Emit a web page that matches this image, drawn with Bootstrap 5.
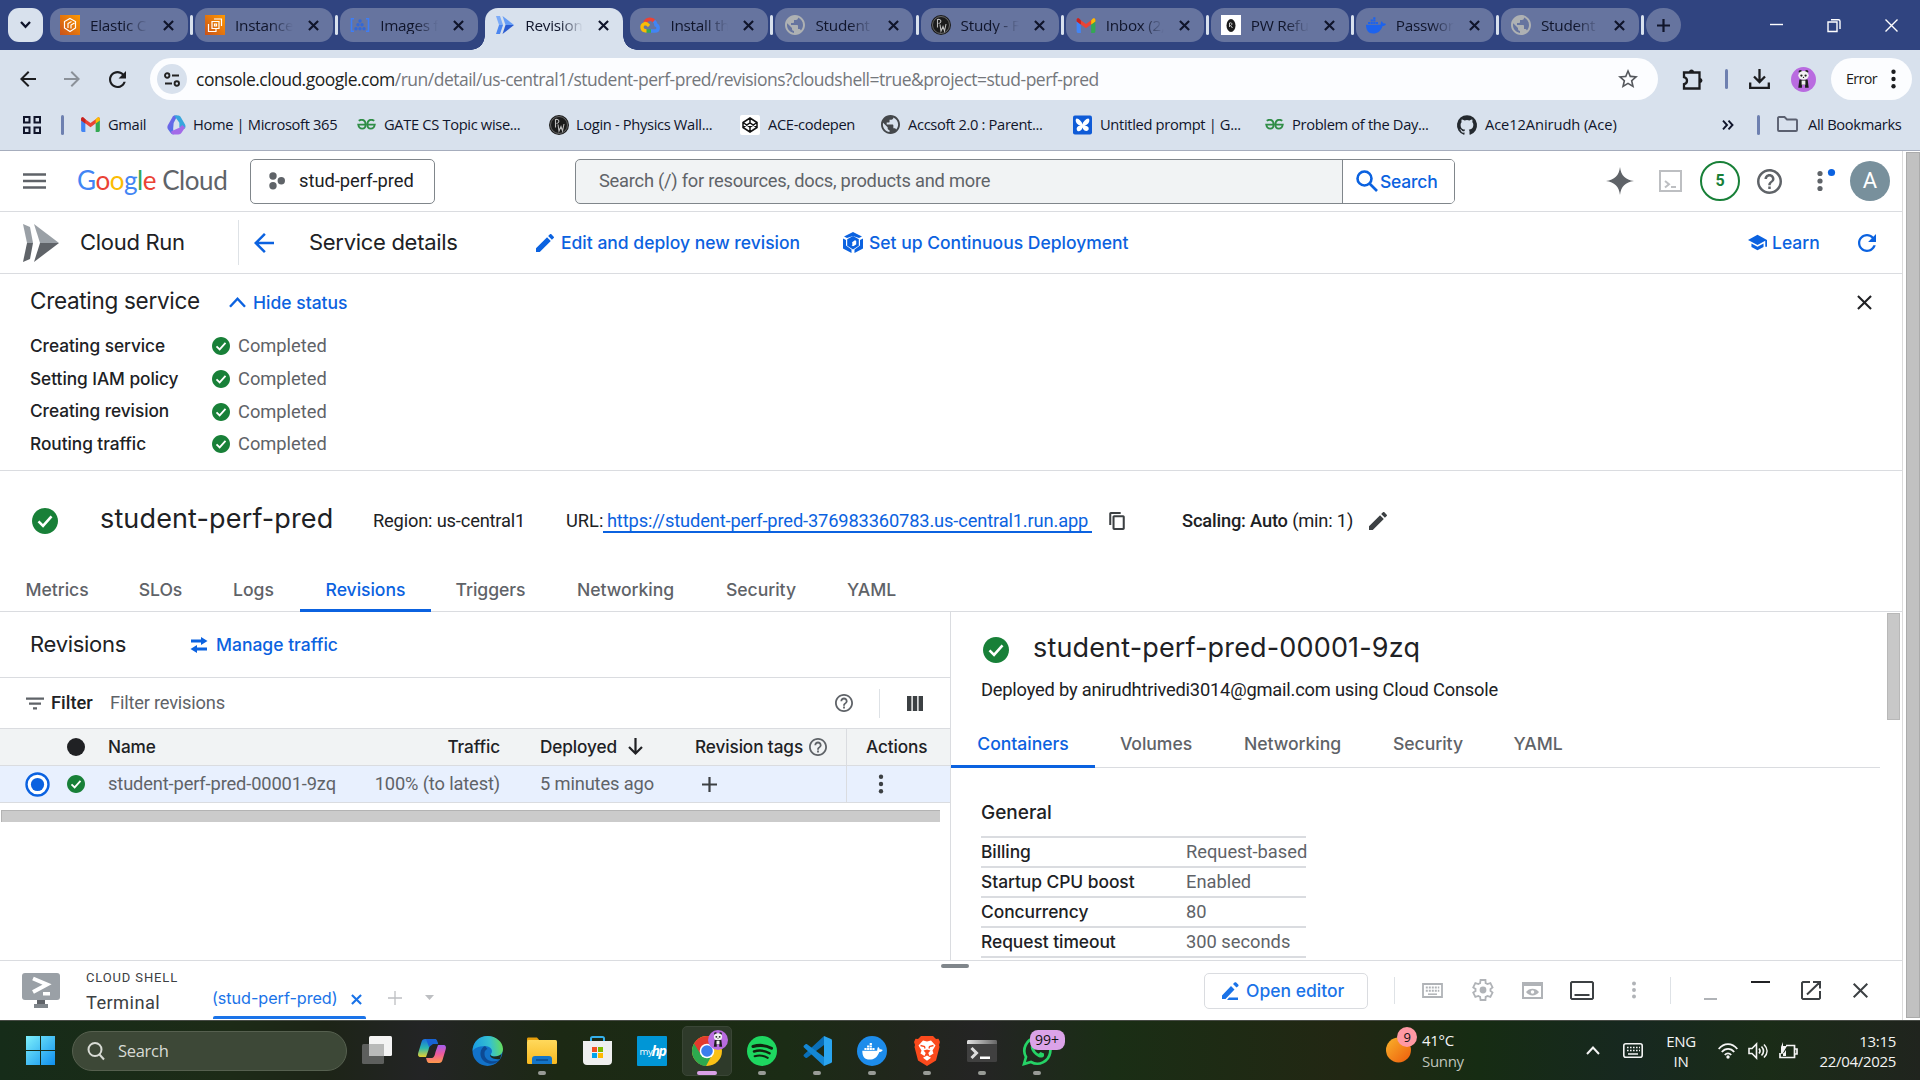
<!DOCTYPE html>
<html lang="en">
<head>
<meta charset="utf-8">
<title>Revisions – Cloud Run</title>
<link href="https://cdn.jsdelivr.net/npm/bootstrap@5.3.0/dist/css/bootstrap.min.css" rel="stylesheet">
<style>
:root{--blue:#0b62e0;--ink:#202124;--dim:#5f6368;--rule:#dadce0;--ok:#188038}
body{width:1920px;height:1080px;overflow:hidden;background:#fff;color:var(--ink);font-family:Roboto,sans-serif;font-size:18.3px;line-height:1.2}
svg{display:block;flex:none;overflow:visible}
.gs{font-family:Inter,sans-serif}
.rowgrid{display:grid;align-items:center;white-space:nowrap}
.fillc{fill:currentColor}
.linec{fill:none;stroke:currentColor}
.blue{color:var(--blue)}.dim{color:var(--dim)}.okc{color:var(--ok)}
.fw5{font-weight:500}
.act{font-family:Inter,sans-serif;font-weight:500;font-size:17.5px;letter-spacing:0;color:var(--blue)}

/* browser tabs */
.tabstrip{height:50px;background:#304480;padding:8px 0 0 8px;font-family:"Open Sans",sans-serif;font-size:15.3px;letter-spacing:-.25px;color:#10152b}
.tabsearch{width:35px;height:34px;border-radius:11px;background:#d8e1ed;margin-right:7px}
.btab{width:138px;height:34px;border-radius:13px;background:#66749f;padding:0 10px;position:relative;flex:none}
.btab .lbl{width:58px;margin-left:10px;overflow:hidden;white-space:nowrap;-webkit-mask-image:linear-gradient(90deg,#000 60%,transparent);mask-image:linear-gradient(90deg,#000 60%,transparent)}
.btab .cls{margin-left:15px}
.tsep{width:7.1px;height:34px;flex:none}
.tsep i{width:3px;height:20px;border-radius:2px;background:#d8e1ed}
.btab.on{height:42px;background:#d8e1ed;border-radius:13px 13px 0 0;padding-bottom:8px}
.btab.on::before,.btab.on::after{content:"";position:absolute;bottom:0;width:14px;height:14px}
.btab.on::before{left:-14px;background:radial-gradient(circle at 0 0,transparent 13.5px,#d8e1ed 14px)}
.btab.on::after{right:-14px;background:radial-gradient(circle at 100% 0,transparent 13.5px,#d8e1ed 14px)}
.newtab{width:35px;height:34px;border-radius:17px;background:#66749f}
.winctl{margin-left:auto;padding-right:22px;gap:44px;height:34px;color:#fff}

/* toolbar and bookmarks */
.toolrow{height:58px;background:#d8e1ed;padding-left:20px;grid-template-columns:44px 45px 41px 1532px 43px 24px 42px 40px 81px;color:#1c1d20}
.omni{width:1508px;height:42px;border-radius:21px;background:#fcfdff;padding:0 20px 0 7px;font-family:"Open Sans",sans-serif;font-size:17.5px;letter-spacing:-.5px;color:#74777c}
.siteinfo{width:30px;height:30px;border-radius:50%;background:#d8e1ed;margin-right:9px}
.vbar{width:3px;height:20px;border-radius:2px;background:#6e80b0}
.errpill{height:42px;border-radius:21px;background:#fcfdff;padding:0 15px;font-family:"Open Sans",sans-serif;font-size:14.3px;letter-spacing:-.6px}
.markrow{height:43px;padding:0 0 9px 23px;background:#d8e1ed;border-bottom:1px solid #a6adbd;grid-template-columns:38px 20px 86px 190px 192px 191px 141px 192px 192px 192px 265px 35px 20px 150px;font-family:"Open Sans",sans-serif;font-size:14.7px;letter-spacing:-.34px;color:#10152b}
.bm{display:flex;align-items:center;gap:8px}

/* page */
.page{height:869px}
.view{width:1902px}
.pagebar{width:18px;border-left:1px solid #dcdcdc;background:#fff;padding:1px 0 2px 3px}
.pagebar div{height:100%;background:#c1c1c1;border:1px solid #ababab}
.headrow{height:61px;border-bottom:1px solid var(--rule);padding-left:23px;grid-template-columns:54px 173px 325px 1031px 53px 41px 57px 59px 34px 50px}
.glogo{font-family:Lato,sans-serif;font-size:26px;letter-spacing:-.45px}
.projbtn{width:185px;height:45px;border:1px solid #80868b;border-radius:5px;padding-left:18px;gap:14px}
.searchbox{width:880px;height:45px;border:1px solid #80868b;border-radius:5px;background:#f1f3f4;overflow:hidden}
.searchbox .ph{width:766px;padding-left:23px;letter-spacing:-.24px}
.searchbtn{flex:1;background:#fff;border-left:1px solid #80868b;padding-left:13px;gap:2px}
.quota{width:40px;height:40px;border-radius:50%;border:2.5px solid var(--ok);font-size:16px;font-weight:700}
.avatar{width:40px;height:40px;border-radius:50%;background:#78909c;color:#fff;font-size:22px}
.titlerow{height:62px;border-bottom:1px solid var(--rule);padding-left:23px;grid-template-columns:57px 158px 16px 55px 227px 307px 905px 110px 30px}
.title{font-family:Inter,sans-serif;font-size:22px;letter-spacing:-.3px}
.statusbox{height:197px;border-bottom:1px solid var(--rule);padding:11px 28px 0 30px}
.stathead{height:31px;grid-template-columns:199px 1626px 20px}
.stathead .h{font-family:Inter,sans-serif;font-size:22.5px;letter-spacing:-.3px}
.statrows{padding-top:14px}
.statline{height:32.7px;grid-template-columns:182px 26px 200px}
.statline b{font-family:Inter,sans-serif;font-weight:500;font-size:17.3px;letter-spacing:-.05px}
.svcrow{height:100px;padding-left:32px;grid-template-columns:68px 273px 193px 543px 73px 187px 30px}
.svcrow .h{font-family:Inter,sans-serif;font-size:27px;letter-spacing:.14px;padding-bottom:4px}
.svcrow .r{letter-spacing:-.18px}
.svcrow .url{color:var(--blue);border-bottom:2px solid var(--blue);padding:0 4px;margin-left:-5px;letter-spacing:-.15px}
.mtabs{display:flex;border-bottom:1px solid var(--rule);font-family:Inter,sans-serif;font-weight:500;font-size:17.6px;letter-spacing:-.05px;color:var(--dim);white-space:nowrap}
.mtabs span{display:flex;align-items:center;justify-content:center;flex:none;margin-bottom:-1px;border-bottom:3px solid transparent}
.mtabs .on{color:var(--blue);border-color:var(--blue)}
.mtabs.main{height:41px}
.mtabs.sub{height:31px;width:929px}
.mtabs.sub span{height:31px;padding-bottom:14px}
.leftpane{width:951px;border-right:1px solid var(--rule)}
.revhead{height:66px;border-bottom:1px solid var(--rule);padding-left:30px;grid-template-columns:160px 26px 200px}
.filterrow{height:51px;border-bottom:1px solid var(--rule);padding-left:26px;grid-template-columns:25px 59px 725px 44px 28px 30px}
.revcols{padding-left:25px;grid-template-columns:42px 41px 392px 40px 155px 151px 35px 104px}
.revcols.hd{height:37px;background:#f1f3f4;border-bottom:1px solid var(--rule);font-family:Inter,sans-serif;font-weight:500;font-size:17.2px;letter-spacing:-.1px}
.revcols.bd{height:37px;padding-bottom:1px;background:#e8f0fe;border-bottom:1px solid var(--rule);color:var(--dim);letter-spacing:-.14px}
.revcols .acts{border-left:1px solid var(--rule);height:36px;display:flex;align-items:center;padding-left:19px;grid-column:7/9}
.revcols.bd .acts{padding-left:31px;color:#3c4043}
.hbar{width:939px;height:12px;margin:7px 0 0 1px;background:#cbcbcb;border-top:1px solid #b3b3b3;border-left:1px solid #b3b3b3}
.rightpane{width:951px}
.rvtitle{height:57px;padding:19px 0 0 32px;gap:24px}
.rvtitle .h{font-family:Inter,sans-serif;font-size:27px;letter-spacing:.16px;padding-bottom:3px}
.rvby{padding:10px 0 0 30px;height:68px;letter-spacing:-.2px}
.vthumb{width:13px;height:107px;margin-top:1px;background:#c8c8c8;border:1px solid #b8b8b8}
.gentitle{padding:34px 0 0 30px;height:68px;font-size:19px}
.facts{width:325px;margin-left:30px;border-top:2px solid var(--rule)}
.facts div{height:30px;border-bottom:2px solid var(--rule);grid-template-columns:205px 120px}
.facts b{font-family:Inter,sans-serif;font-weight:500;font-size:17.4px;letter-spacing:-.05px}
.shell{height:59px;border-top:1px solid var(--rule);background:#fff;padding-left:22px;grid-template-columns:64px 126px 139px 37px 37px 779px 190px 28px 50px 50px 48px 59px 43px 32px 47px 50px 52px 30px;position:relative}
.grip{position:absolute;left:941px;top:3px;width:28px;height:4px;border-radius:2px;background:#80868b}
.shtab{color:#1a73e8;font-family:Inter,sans-serif;font-size:16.2px;letter-spacing:-.05px;padding-top:18px}
.shtab::after{content:"";position:absolute;left:213px;bottom:0;width:153px;height:3px;border-radius:2px 2px 0 0;background:#1a73e8}
.edbtn{width:164px;height:36px;margin-top:1px;border:1px solid var(--rule);border-radius:5px;padding-left:17px;gap:6px;color:#1a73e8}

/* taskbar */
.taskbar{height:60px;border-top:1px solid #474b45;padding-left:26px;grid-template-columns:46px 277.5px repeat(13,55px) 319.5px 202px 37px 37px 58px 30px 30px 24px 94px;color:#f4f4f4;font-family:"Open Sans",sans-serif;font-size:15px;letter-spacing:-.3px;
background:linear-gradient(90deg,#162c19 0,#1d2b17 12%,#1d2417 17%,#232425 22%,#1c2914 29%,#1b2c15 41%,#21261c 47%,#242424 51%,#1a2e15 58%,#222713 70%,#162c13 77%,#172820 85%,#1a2c17 92%,#20241e 100%)}
.tsearch{width:275px;height:40px;border-radius:20px;background:#3d4837;border:1px solid #56604f;padding-left:14px;gap:13px;font-size:16.5px;color:#d8dbd5}
.tapp{height:50px;display:flex;flex-direction:column;align-items:center;justify-content:center;position:relative}
.tapp.run::after{content:"";position:absolute;bottom:1px;width:8px;height:4px;border-radius:2px;background:#989b96}
.tapp.cur{width:50px;margin-left:2.5px;background:#2e3a2a;border:1px solid #3a4636;border-radius:5px}
.tapp.cur::after{width:20px;background:#d9a0e6;bottom:0}
.cnt{position:absolute;left:20px;top:4px;width:35px;height:20px;border-radius:8px;background:#dba3e8;color:#111;text-align:center;font-size:14px;line-height:20px;letter-spacing:0}
.wx{position:relative;padding-left:38px;line-height:21px}
.wxn{position:absolute;left:13px;top:-3px;width:20px;height:20px;border-radius:50%;background:#ff99a4;color:#111;text-align:center;font-size:13px;line-height:20px}
</style>
<script src="https://cdn.jsdelivr.net/npm/bootstrap@5.3.0/dist/js/bootstrap.bundle.min.js"></script>
</head>
<body class="d-flex flex-column">
<svg width="0" height="0" class="position-absolute">
<defs>
<linearGradient id="gor" x1="0" y1="1" x2="1" y2="0"><stop offset="0" stop-color="#c8511b"/><stop offset="1" stop-color="#f90"/></linearGradient>
<linearGradient id="gwin" x1="0" y1="0" x2="1" y2="1"><stop offset="0" stop-color="#7df0fb"/><stop offset="1" stop-color="#0f8fee"/></linearGradient>
<linearGradient id="gedge" x1="0" y1="0.2" x2="1" y2="0.1"><stop offset="0" stop-color="#1b9de2"/><stop offset=".55" stop-color="#35c1d0"/><stop offset="1" stop-color="#6be04f"/></linearGradient>
<linearGradient id="gsun" x1="0" y1="0" x2="1" y2="1"><stop offset="0" stop-color="#f9b32b"/><stop offset="1" stop-color="#ee5b0c"/></linearGradient>
<linearGradient id="gcp1" x1="0" y1="0" x2="0" y2="1"><stop offset="0" stop-color="#1a6fe0"/><stop offset=".5" stop-color="#29b7b0"/><stop offset="1" stop-color="#e8d030"/></linearGradient>
<linearGradient id="gcp2" x1="0" y1="0" x2="0" y2="1"><stop offset="0" stop-color="#a35df0"/><stop offset=".5" stop-color="#ee5a9c"/><stop offset="1" stop-color="#ff9a4a"/></linearGradient>
<linearGradient id="gm1" x1="0" y1="0" x2="1" y2="1"><stop offset="0" stop-color="#8a5be8"/><stop offset="1" stop-color="#2f7de8"/></linearGradient>
<linearGradient id="gfold" x1="0" y1="0" x2="0" y2="1"><stop offset="0" stop-color="#ffd95c"/><stop offset="1" stop-color="#f8b91f"/></linearGradient>
<linearGradient id="gterm" x1="0" y1="0" x2="1" y2="0"><stop offset="0" stop-color="#e0e0e0"/><stop offset="1" stop-color="#666"/></linearGradient>
<symbol id="x" viewBox="0 0 24 24"><path class="fillc" d="M19 6.410L17.590 5 12 10.590 6.410 5 5 6.410 10.590 12 5 17.590 6.410 19 12 13.410 17.590 19 19 17.590 13.410 12z"/></symbol>
<symbol id="xs" viewBox="0 0 12 12"><path class="linec" stroke-width="2.300" d="M1 1l10 10M11 1L1 11"/></symbol>
<symbol id="ok" viewBox="2 2 20 20"><path class="fillc" d="M12 2C6.480 2 2 6.480 2 12s4.480 10 10 10 10-4.480 10-10S17.520 2 12 2z"/><path d="M7 12.300l3.500 3.500L17 8.500" fill="none" stroke="#fff" stroke-width="2"/></symbol>
<symbol id="pen" viewBox="3 3 18 18"><path class="fillc" d="M3 17.250V21h3.750L17.810 9.940l-3.750-3.750L3 17.250zM20.710 7.040c.390-.390.390-1.020 0-1.410l-2.340-2.340c-.390-.390-1.020-.390-1.410 0l-1.830 1.830 3.750 3.750 1.830-1.830z"/></symbol>
<symbol id="help" viewBox="2 2 20 20"><path class="fillc" d="M11 18h2v-2h-2v2zm1-16C6.480 2 2 6.480 2 12s4.480 10 10 10 10-4.480 10-10S17.520 2 12 2zm0 18c-4.410 0-8-3.590-8-8s3.590-8 8-8 8 3.590 8 8-3.590 8-8 8zm0-14c-2.210 0-4 1.790-4 4h2c0-1.100.900-2 2-2s2 .900 2 2c0 2-3 1.750-3 5h2c0-2.250 3-2.500 3-5 0-2.210-1.790-4-4-4z"/></symbol>
<symbol id="dots" viewBox="0 0 6 22"><g class="fillc"><circle cx="3" cy="3" r="2.400"/><circle cx="3" cy="11" r="2.400"/><circle cx="3" cy="19" r="2.400"/></g></symbol>
<symbol id="refresh" viewBox="4 4 16 16"><path class="fillc" d="M17.650 6.350C16.200 4.900 14.210 4 12 4c-4.420 0-7.990 3.580-7.990 8s3.570 8 7.990 8c3.730 0 6.840-2.550 7.730-6h-2.080c-.820 2.330-3.040 4-5.650 4-3.310 0-6-2.690-6-6s2.690-6 6-6c1.660 0 3.140.690 4.220 1.780L13 11h7V4l-2.350 2.350z"/></symbol>
<symbol id="back" viewBox="4 4 16 16"><path class="fillc" d="M20 11H7.830l5.590-5.590L12 4l-8 8 8 8 1.410-1.410L7.830 13H20v-2z"/></symbol>
<symbol id="globe" viewBox="2 2 20 20"><path class="fillc" d="M12 2C6.480 2 2 6.480 2 12s4.480 10 10 10 10-4.480 10-10S17.520 2 12 2zm-1 17.930c-3.950-.490-7-3.850-7-7.930 0-.620.080-1.210.210-1.790L9 15v1c0 1.100.900 2 2 2v1.930zm6.900-2.540c-.260-.810-1-1.390-1.900-1.390h-1v-3c0-.550-.450-1-1-1H8v-2h2c.550 0 1-.450 1-1V7h2c1.100 0 2-.900 2-2v-.410c2.930 1.190 5 4.060 5 7.410 0 2.080-.800 3.970-2.100 5.390z"/></symbol>
<symbol id="gmail" viewBox="0 0 20 16"><path fill="#4285f4" d="M0 2v12.500c0 .8.600 1.500 1.400 1.500H4.500V6z"/><path fill="#34a853" d="M20 2v12.500c0 .8-.6 1.500-1.400 1.500H15.500V6z"/><path fill="#ea4335" d="M1.500.3C.6.500 0 1.200 0 2v1.500L10 11l10-7.500V2c0-.8-.6-1.500-1.500-1.700L10 6.500z"/><path fill="#c5221f" d="M0 2v1.700L4.500 7V2.500L2.900.7C1.500-.3 0 .6 0 2z"/><path fill="#fbbc04" d="M20 2v1.700L15.500 7V2.500L17.100.7C18.500-.3 20 .6 20 2z"/></symbol>
<symbol id="pw" viewBox="0 0 20 20"><circle cx="10" cy="10" r="10" fill="#1b1b1b"/><circle cx="10" cy="10" r="8.500" fill="none" stroke="#999" stroke-width=".6"/><path d="M6.500 12.500V4.500c4-1 4.500 3.500 1 4M9 9.500l1 6.500 2-4.500 1.500 4.500L15 9" fill="none" stroke="#bbb" stroke-width="1.100"/></symbol>
<symbol id="gfg" viewBox="0 0 20 12"><g fill="none" stroke="#2f8d46" stroke-width="2"><path d="M1.500 2C5-.5 9 1 9 6c0 6-7 6-8 .2h8M18.500 2C15-.5 11 1 11 6c0 6 7 6 8 .2h-8"/></g></symbol>
<symbol id="whale" viewBox="0 0 24 20"><path class="fillc" d="M0 9h17.500c.4-1.500 0-3 1.200-4.200 1 .6 1.600 1.600 1.700 2.700 1.200-.2 2.500 0 3.600.6-.8 1.700-2.300 2.400-4 2.400C17.800 16.500 14 19.500 8.500 19.500 3 19.500 0 16 0 9zM2.500 5.800h2.600v2.500H2.500zM5.600 5.800h2.600v2.500H5.600zM8.700 5.800h2.600v2.500H8.700zM11.800 5.800h2.600v2.500h-2.600zM5.600 2.900h2.600v2.400H5.600zM8.700 2.900h2.600v2.400H8.700zM8.700 0h2.600v2.400H8.700z"/></symbol>
<symbol id="panda" viewBox="0 0 24 24"><circle cx="12" cy="12" r="12" fill="#b96be0"/><circle cx="9" cy="4.500" r="1.700" fill="#222"/><circle cx="15" cy="4.500" r="1.700" fill="#222"/><path d="M8 12h8l1 8h-3.500v-3h-3v3H7z" fill="#1d1d1d"/><rect x="10.200" y="13" width="3.600" height="4" fill="#eee"/><ellipse cx="12" cy="8" rx="5" ry="4.200" fill="#f2f2f2"/><circle cx="10" cy="8.200" r="1.100" fill="#222"/><circle cx="14" cy="8.200" r="1.100" fill="#222"/><circle cx="12" cy="10" r=".6" fill="#222"/></symbol>
</defs>
</svg>

<!-- browser tab strip -->
<div class="tabstrip d-flex align-items-start">
  <div class="tabsearch d-flex align-items-center justify-content-center"><svg width="11" height="8" viewBox="0 0 11 8"><path class="linec" stroke-width="2.300" d="M1 1l4.500 4.800L10 1"/></svg></div>
  <div class="btab d-flex align-items-center"><svg width="20" height="20" viewBox="0 0 20 20"><rect width="20" height="20" fill="url(#gor)"/><path d="M10 3.500l5.500 3v6.500L10 16.500 4.500 13V6.500zM8 13V8.500l3.500-2M11 13.500V10l3.500-2" fill="none" stroke="#fff" stroke-width="1.200"/></svg><span class="lbl">Elastic C</span><svg class="cls" width="11" height="11"><use href="#xs"/></svg></div>
  <div class="tsep d-flex align-items-center justify-content-center"><i></i></div>
  <div class="btab d-flex align-items-center"><svg width="20" height="20" viewBox="0 0 20 20"><rect width="20" height="20" fill="url(#gor)"/><path d="M7 6.500h7v7H7zM9 4h7.500v7M3.500 9v7.500H11V14M9.500 9h2v2h-2z" fill="none" stroke="#fff" stroke-width="1.200"/></svg><span class="lbl">Instance</span><svg class="cls" width="11" height="11"><use href="#xs"/></svg></div>
  <div class="tsep d-flex align-items-center justify-content-center"><i></i></div>
  <div class="btab d-flex align-items-center"><svg width="20" height="14" viewBox="0 0 20 14"><path d="M4 .8H1.500v12.400H4M16 .8h2.500v12.400H16" fill="none" stroke="#3e7df5" stroke-width="1.600"/><g fill="#3367d6"><circle cx="10" cy="3" r="1.700"/><circle cx="8" cy="6.800" r="1.700"/><circle cx="12" cy="6.800" r="1.700"/><circle cx="6" cy="10.700" r="1.700"/><circle cx="10" cy="10.700" r="1.700"/><circle cx="14" cy="10.700" r="1.700"/></g></svg><span class="lbl">Images f</span><svg class="cls" width="11" height="11"><use href="#xs"/></svg></div>
  <div class="tsep"></div>
  <div class="btab on d-flex align-items-center"><svg width="20" height="18" viewBox="0 0 20 18"><path fill="#7baaf7" d="M1 0h4l3 9H4z"/><path fill="#4c86f0" d="M4 9h4l-3 9H1z"/><path fill="#669df6" d="M7.500 0L19 9h-8.500z"/><path fill="#2a5bd0" d="M10.500 9H19L7.500 18z"/></svg><span class="lbl">Revision</span><svg class="cls" width="11" height="11"><use href="#xs"/></svg></div>
  <div class="tsep"></div>
  <div class="btab d-flex align-items-center"><svg width="20" height="16" viewBox="0 0 20 16"><path d="M5 5.500a5.500 5.500 0 0 1 9.500-1" fill="none" stroke="#ea4335" stroke-width="3.500"/><path d="M14 4a6 6 0 0 1 2 4c3 1 3 6-1 6h-4.500" fill="none" stroke="#4285f4" stroke-width="3.500"/><path d="M11 14H6" stroke="#34a853" stroke-width="3.500"/><path d="M6.500 14C1 14 .5 8 5 6.500c2 0 2.500 1 4 2.500" fill="none" stroke="#fbbc04" stroke-width="3.300"/></svg><span class="lbl">Install th</span><svg class="cls" width="11" height="11"><use href="#xs"/></svg></div>
  <div class="tsep d-flex align-items-center justify-content-center"><i></i></div>
  <div class="btab d-flex align-items-center"><svg width="20" height="20" style="color:#aeb1b3"><use href="#globe"/></svg><span class="lbl">Student</span><svg class="cls" width="11" height="11"><use href="#xs"/></svg></div>
  <div class="tsep d-flex align-items-center justify-content-center"><i></i></div>
  <div class="btab d-flex align-items-center"><svg width="20" height="20"><use href="#pw"/></svg><span class="lbl">Study - F</span><svg class="cls" width="11" height="11"><use href="#xs"/></svg></div>
  <div class="tsep d-flex align-items-center justify-content-center"><i></i></div>
  <div class="btab d-flex align-items-center"><svg width="20" height="15"><use href="#gmail"/></svg><span class="lbl">Inbox (2,</span><svg class="cls" width="11" height="11"><use href="#xs"/></svg></div>
  <div class="tsep d-flex align-items-center justify-content-center"><i></i></div>
  <div class="btab d-flex align-items-center"><svg width="20" height="20" viewBox="0 0 20 20"><rect width="20" height="20" fill="#fff"/><ellipse cx="10" cy="10.500" rx="4.500" ry="6.500" fill="#1b1b1b"/><path d="M8.500 12V8c3-1 3 2 1 2.500l2 2.500" fill="none" stroke="#ccc"/></svg><span class="lbl">PW Refu</span><svg class="cls" width="11" height="11"><use href="#xs"/></svg></div>
  <div class="tsep d-flex align-items-center justify-content-center"><i></i></div>
  <div class="btab d-flex align-items-center"><svg width="20" height="17" style="color:#1d63ed"><use href="#whale"/></svg><span class="lbl">Passwor</span><svg class="cls" width="11" height="11"><use href="#xs"/></svg></div>
  <div class="tsep d-flex align-items-center justify-content-center"><i></i></div>
  <div class="btab d-flex align-items-center"><svg width="20" height="20" style="color:#aeb1b3"><use href="#globe"/></svg><span class="lbl">Student</span><svg class="cls" width="11" height="11"><use href="#xs"/></svg></div>
  <div class="tsep d-flex align-items-center justify-content-center"><i></i></div>
  <div class="newtab d-flex align-items-center justify-content-center"><svg width="13" height="13" viewBox="0 0 13 13"><path class="linec" stroke-width="2.200" d="M6.500 0v13M0 6.500h13"/></svg></div>
  <div class="winctl d-flex align-items-center"><svg width="13" height="13" viewBox="0 0 13 13"><path class="linec" stroke-width="1.400" d="M0 5.500h13"/></svg><svg width="14" height="13" viewBox="0 0 14 13"><path class="linec" stroke-width="1.400" d="M1 3h9v9.500H1zM4 .7h7.500c.8 0 1.500.7 1.500 1.500V10"/></svg><svg width="13" height="13" viewBox="0 0 13 13"><path class="linec" stroke-width="1.400" d="M.5.5l12 12M12.500.5l-12 12"/></svg></div>
</div>

<!-- toolbar -->
<div class="toolrow rowgrid">
  <svg width="16" height="16"><use href="#back"/></svg>
  <svg width="16" height="16" style="color:#8b9199;transform:scaleX(-1)"><use href="#back"/></svg>
  <svg width="17" height="17"><use href="#refresh"/></svg>
  <div class="omni d-flex align-items-center">
    <span class="siteinfo d-flex align-items-center justify-content-center"><svg width="16" height="15" viewBox="0 0 16 15"><g class="linec" stroke-width="1.900" style="color:#222"><circle cx="3.200" cy="3.500" r="2.200"/><path d="M8 3.500h7M1 11.500h7"/><circle cx="12.800" cy="11.500" r="2.200"/></g></svg></span>
    <span><span style="color:#1c1d20">console.cloud.google.com</span>/run/detail/us-central1/student-perf-pred/revisions?cloudshell=true&amp;project=stud-perf-pred</span>
    <svg class="ms-auto" width="20" height="20" viewBox="2 2 20 20" style="color:#55585d"><path class="fillc" d="M22 9.240l-7.190-.620L12 2 9.190 8.630 2 9.240l5.460 4.730L5.820 21 12 17.270 18.180 21l-1.630-7.030L22 9.240zM12 15.400l-3.760 2.270 1-4.280-3.320-2.880 4.380-.380L12 6.100l1.710 4.040 4.380.380-3.320 2.880 1 4.280L12 15.400z"/></svg>
  </div>
  <svg width="21" height="21" viewBox="0 0 21 21"><path class="linec" stroke-width="2.300" d="M2 3.500h15.500V19.500H2v-4.300c4-1 4-6 0-7z"/><path class="fillc" d="M7 3a2.500 2.500 0 0 1 5 0zM18 9a2.500 2.500 0 0 1 0 5z"/></svg>
  <div class="vbar"></div>
  <svg width="21" height="20" viewBox="0 0 21 20"><path class="linec" stroke-width="2.300" d="M10.500 0v12.500M5 7.500l5.500 5.500L16 7.500M1.200 13.500v5.300h18.600v-5.300"/></svg>
  <svg width="25" height="25"><use href="#panda"/></svg>
  <div class="errpill d-flex align-items-center justify-content-between">Error<svg width="7" height="20"><use href="#dots"/></svg></div>
</div>

<!-- bookmarks -->
<div class="markrow rowgrid">
  <svg width="18" height="18" viewBox="0 0 18 18"><path class="linec" stroke-width="2" d="M1 1h5.500v5.500H1zM11.500 1H17v5.500h-5.500zM1 11.500h5.500V17H1zM11.500 11.500H17V17h-5.500z"/></svg>
  <div class="vbar"></div>
  <div class="bm"><svg width="19" height="15"><use href="#gmail"/></svg>Gmail</div>
  <div class="bm" style="gap:7px"><svg width="19" height="20" viewBox="0 0 20 20"><path d="M11 0H8.500C7 0 6 .7 5.500 2L1 10c-.8 1.500-.8 3 0 4.500L3.500 18c.8 1.300 2 2 3.500 2l-.5-6L7 8z" fill="url(#gm1)"/><path d="M7.500 0h4c1.500 0 2.500.7 3.200 2L19 9.500c.7 1.500.7 3-.3 4.500L13 12.500V7.500z" fill="#37a6dd"/><path d="M19 12.500L15.500 18c-.8 1.300-2 2-3.500 2H7c-2 0-3-1.500-2.500-3.500L13 13l3-3z" fill="#a36ae8"/></svg><span>Home | Microsoft 365</span></div>
  <div class="bm"><svg width="19" height="11"><use href="#gfg"/></svg>GATE CS Topic wise...</div>
  <div class="bm" style="gap:7px"><svg width="20" height="20"><use href="#pw"/></svg>Login - Physics Wall...</div>
  <div class="bm"><svg width="20" height="20" viewBox="0 0 20 20"><rect width="20" height="20" rx="2" fill="#fff"/><path d="M10 3l7 4.500v5L10 17l-7-4.500v-5zM3 7.500l7 4.700 7-4.700M3 12.500l7-4.700 7 4.700M10 3v4.800M10 12.200V17" fill="none" stroke="#111" stroke-width="1.500"/></svg>ACE-codepen</div>
  <div class="bm"><svg width="19" height="19" style="color:#44474b"><use href="#globe"/></svg>Accsoft 2.0 : Parent...</div>
  <div class="bm"><svg width="19" height="20" viewBox="0 0 20 20"><rect width="20" height="20" rx="2" fill="#0f5bd7"/><path fill="#fff" d="M10 9.500C9.500 6 4 1.500 3 4c-.8 3 1.500 6 5 6.500-3.500.5-4.500 2-4 4.500 1 3 5 1.500 6-2.500 1 4 5.500 5 6.500 2 .5-2.500-1-3.500-4.500-4C15.500 10 18 7 17 4c-1-2.500-6.500 2-7 5.500z"/></svg>Untitled prompt | G...</div>
  <div class="bm"><svg width="19" height="11"><use href="#gfg"/></svg>Problem of the Day...</div>
  <div class="bm"><svg width="20" height="20" viewBox="0 0 24 24" style="color:#24292f"><path class="fillc" d="M12 .3a12 12 0 0 0-3.800 23.400c.6.1.8-.3.8-.6v-2c-3.300.7-4-1.600-4-1.600-.6-1.400-1.400-1.800-1.400-1.800-1-.7.1-.7.1-.7 1.200 0 1.900 1.200 1.900 1.200 1 1.800 2.800 1.300 3.500 1 0-.8.4-1.300.7-1.600-2.700-.3-5.500-1.300-5.500-6 0-1.200.5-2.300 1.300-3.100-.2-.4-.6-1.600 0-3.200 0 0 1-.3 3.400 1.200a11.500 11.500 0 0 1 6 0c2.300-1.500 3.300-1.200 3.300-1.200.6 1.600.2 2.800 0 3.200.9.8 1.300 1.900 1.300 3.200 0 4.600-2.800 5.600-5.500 5.900.5.4.9 1 .9 2.200v3.300c0 .3.1.7.8.6A12 12 0 0 0 12 .3"/></svg><span style="letter-spacing:-.1px">Ace12Anirudh (Ace)</span></div>
  <svg width="12" height="10" viewBox="0 0 12 10"><path class="linec" stroke-width="1.900" d="M1 .7L5 5 1 9.300M6.500.7l4 4.300-4 4.300"/></svg>
  <div class="vbar"></div>
  <div class="bm" style="gap:10px"><svg width="21" height="16" viewBox="0 0 21 16"><path d="M1 14V2c0-.5.400-1 1-1h5.500l2.500 2.500h9c.6 0 1 .4 1 1V14c0 .6-.4 1-1 1H2c-.6 0-1-.4-1-1z" fill="none" stroke="#5b6070" stroke-width="1.900"/></svg>All Bookmarks</div>
</div>

<!-- console page -->
<div class="page d-flex">
<main class="view">
  <header class="headrow rowgrid">
    <svg width="23" height="16" viewBox="0 0 23 16"><path d="M0 1.500h23M0 8h23M0 14.500h23" stroke="#5f6368" stroke-width="2.600"/></svg>
    <div class="glogo"><span style="color:#4285f4">G</span><span style="color:#ea4335">o</span><span style="color:#fbbc04">o</span><span style="color:#4285f4">g</span><span style="color:#34a853">l</span><span style="color:#ea4335">e</span> <span class="dim">Cloud</span></div>
    <div class="projbtn d-flex align-items-center"><svg width="16" height="18" viewBox="0 0 16 18" fill="#5f6368"><circle cx="4" cy="4" r="3.700"/><circle cx="12.300" cy="8.800" r="3.700"/><circle cx="4" cy="13.800" r="3.700"/></svg>stud-perf-pred</div>
    <div class="searchbox d-flex"><span class="ph dim d-flex align-items-center">Search (/) for resources, docs, products and more</span><span class="searchbtn act d-flex align-items-center"><svg width="22" height="22" viewBox="0 0 22 22"><g class="linec" stroke-width="2.600"><circle cx="8.500" cy="8.500" r="7"/><path d="M13.500 13.500l7.500 7.500"/></g></svg><span style="letter-spacing:-.2px">Search</span></span></div>
    <svg width="28" height="28" viewBox="0 0 28 28"><path fill="#5f6368" d="M14 0c1 8.500 5.500 13 14 14-8.500 1-13 5.500-14 14-1-8.500-5.500-13-14-14 8.500-1 13-5.500 14-14z"/></svg>
    <svg width="23" height="22" viewBox="0 0 23 22"><path fill="none" stroke="#bdbfc2" stroke-width="2" d="M1 1h21v20H1zM6 11l4 3.200L6 17.500M12 17h5"/></svg>
    <div class="quota okc d-flex align-items-center justify-content-center">5</div>
    <svg width="25" height="25" class="dim"><use href="#help"/></svg>
    <svg width="20" height="22" viewBox="0 0 20 22"><g fill="#5f6368"><circle cx="4" cy="3.500" r="2.600"/><circle cx="4" cy="11" r="2.600"/><circle cx="4" cy="18.500" r="2.600"/></g><circle cx="15.500" cy="2.500" r="3.600" fill="#0b62e0"/></svg>
    <div class="avatar d-flex align-items-center justify-content-center">A</div>
  </header>

  <section class="titlerow rowgrid">
    <svg width="36" height="38" viewBox="0 0 36 38"><path fill="#9aa0a6" d="M0 0l7 3 3 16H4z"/><path fill="#5f6368" d="M4 19h6L7 35l-7 3z"/><path fill="#9aa0a6" d="M11 0l25 19H17z"/><path fill="#5f6368" d="M17 19h19L11 38z"/></svg>
    <span class="title">Cloud Run</span>
    <span class="border-start h-75"></span>
    <svg width="20" height="20" class="blue"><use href="#back"/></svg>
    <span class="title">Service details</span>
    <span class="act d-flex align-items-center" style="gap:7px"><svg width="18" height="18"><use href="#pen"/></svg>Edit and deploy new revision</span>
    <span class="act d-flex align-items-center" style="gap:6px"><svg width="20" height="22" viewBox="0 0 20 22"><path class="fillc" d="M10 0l9 4.500-3 1.500-6-2-6 2-3-1.500zM0 6.500l3 1.500v5.500l5.500 4V21L0 16.500zM20 6.500L17 8v5.500l-5.500 4V21l8.500-4.500z"/><path class="linec" stroke-width="2.600" d="M10 5.500l4.500 2.500v5L10 16l-4.500-3V8zM8 13.500V9.500L11.500 7"/></svg>Set up Continuous Deployment</span>
    <span class="act d-flex align-items-center" style="gap:5px"><svg width="19" height="17" viewBox="1 3 22 18"><path class="fillc" d="M5 13.180v4L12 21l7-3.820v-4L12 17l-7-3.820zM12 3L1 9l11 6 9-4.910V17h2V9L12 3z"/></svg>Learn</span>
    <svg width="18" height="18" class="blue"><use href="#refresh"/></svg>
  </section>

  <section class="statusbox">
    <div class="stathead rowgrid">
      <span class="h">Creating service</span>
      <span class="act d-flex align-items-center" style="gap:7px;padding-top:4px"><svg width="17" height="11" viewBox="0 0 17 11"><path class="linec" stroke-width="2.400" d="M1 9.800l7.500-8 7.500 8"/></svg>Hide status</span>
      <svg width="25" height="25" style="margin:4px 0 0 -3px"><use href="#x"/></svg>
    </div>
    <div class="statrows">
      <div class="statline rowgrid"><b>Creating service</b><svg width="18" height="18" class="okc"><use href="#ok"/></svg><span class="dim">Completed</span></div>
      <div class="statline rowgrid"><b>Setting IAM policy</b><svg width="18" height="18" class="okc"><use href="#ok"/></svg><span class="dim">Completed</span></div>
      <div class="statline rowgrid"><b>Creating revision</b><svg width="18" height="18" class="okc"><use href="#ok"/></svg><span class="dim">Completed</span></div>
      <div class="statline rowgrid"><b>Routing traffic</b><svg width="18" height="18" class="okc"><use href="#ok"/></svg><span class="dim">Completed</span></div>
    </div>
  </section>

  <section class="svcrow rowgrid">
    <svg width="26" height="26" class="okc"><use href="#ok"/></svg>
    <span class="h">student-perf-pred</span>
    <span class="r">Region: us-central1</span>
    <span>URL: <a class="url text-decoration-none">https://student-perf-pred-376983360783.us-central1.run.app</a></span>
    <svg width="16" height="18" viewBox="2 1 19 22"><path fill="#3c4043" fill-rule="evenodd" d="M16 1H4c-1.100 0-2 .900-2 2v14h2.500V3.500H16V1zm3 4H8c-1.100 0-2 .900-2 2v14c0 1.100.900 2 2 2h11c1.100 0 2-.900 2-2V7c0-1.100-.900-2-2-2zm-.5 15.500h-10v-13h10v13z"/></svg>
    <span class="r"><span class="fw5">Scaling: Auto</span> (min: 1)</span>
    <svg width="18" height="18" style="color:#3c4043"><use href="#pen"/></svg>
  </section>

  <nav class="mtabs main">
    <span style="width:114px">Metrics</span><span style="width:93px">SLOs</span><span style="width:93px">Logs</span><span class="on" style="width:131px">Revisions</span><span style="width:119px">Triggers</span><span style="width:151px">Networking</span><span style="width:120px">Security</span><span style="width:101px">YAML</span>
  </nav>

  <div class="d-flex overflow-hidden" style="height:348px">
    <section class="leftpane">
      <div class="revhead rowgrid"><span class="title">Revisions</span><svg width="18" height="16" viewBox="0 0 18 16" class="blue"><path class="fillc" d="M1 2.500h10V0l6.500 4-6.500 4V5.500H1zM17 10.500H7V8L.5 12 7 16v-2.500h10z"/></svg><span class="act">Manage traffic</span></div>
      <div class="filterrow rowgrid"><svg width="18" height="13" viewBox="3 6 18 12"><path fill="#5f6368" d="M10 18h4v-2.200h-4V18zM3 6v2.200h18V6H3zm3 7.200h12V11H6v2.200z"/></svg><span class="fw5">Filter</span><span class="dim" style="letter-spacing:-.2px">Filter revisions</span><svg width="18" height="18" class="dim"><use href="#help"/></svg><span class="border-start" style="height:29px"></span><svg width="16" height="15" viewBox="0 0 16 15"><path fill="#3c4043" d="M0 0h4.400v15H0zM5.800 0h4.400v15H5.800zM11.600 0H16v15h-4.400z"/></svg></div>
      <div class="revcols hd rowgrid"><i></i><svg width="18" height="18" viewBox="0 0 20 20"><circle cx="10" cy="10" r="10" fill="#202124"/></svg><span class="d-flex justify-content-between">Name<span>Traffic</span></span><i></i><span class="d-flex align-items-center" style="gap:11px">Deployed<svg width="15" height="17" viewBox="0 0 15 17"><path class="linec" stroke-width="2.200" d="M7.500 0v15M1 9l6.500 6.500L14 9"/></svg></span><span class="d-flex align-items-center" style="gap:6px">Revision tags<svg width="18" height="18" class="dim"><use href="#help"/></svg></span><span class="acts">Actions</span></div>
      <div class="revcols bd rowgrid"><svg width="25" height="25" viewBox="0 0 25 25"><circle cx="12.500" cy="12.500" r="11" fill="#fff" stroke="#0b62e0" stroke-width="2.400"/><circle cx="12.500" cy="12.500" r="6.600" fill="#0b62e0"/></svg><svg width="18" height="18" class="okc"><use href="#ok"/></svg><span class="d-flex justify-content-between">student-perf-pred-00001-9zq<span>100% (to latest)</span></span><i></i><span>5 minutes ago</span><span style="padding-left:7px;color:#3c4043"><svg width="15" height="15" viewBox="0 0 15 15"><path class="linec" stroke-width="2.200" d="M7.500 0v15M0 7.500h15"/></svg></span><span class="acts"><svg width="6" height="20"><use href="#dots"/></svg></span></div>
      <div class="hbar"></div>
    </section>
    <section class="rightpane d-flex flex-column">
      <div class="d-flex">
        <div style="width:936px">
          <div class="rvtitle d-flex align-items-center"><svg width="26" height="26" class="okc"><use href="#ok"/></svg><span class="h">student-perf-pred-00001-9zq</span></div>
          <div class="rvby">Deployed by anirudhtrivedi3014@gmail.com using Cloud Console</div>
          <nav class="mtabs sub"><span class="on" style="width:144px">Containers</span><span style="width:122px">Volumes</span><span style="width:151px">Networking</span><span style="width:120px">Security</span><span style="width:100px">YAML</span></nav>
        </div>
        <div class="vthumb"></div>
      </div>
      <div class="gs fw5 gentitle">General</div>
      <div class="facts">
        <div class="rowgrid"><b>Billing</b><span class="dim">Request-based</span></div>
        <div class="rowgrid"><b>Startup CPU boost</b><span class="dim">Enabled</span></div>
        <div class="rowgrid"><b>Concurrency</b><span class="dim">80</span></div>
        <div class="rowgrid"><b>Request timeout</b><span class="dim">300 seconds</span></div>
      </div>
    </section>
  </div>

  <section class="shell rowgrid">
    <div class="grip"></div>
    <svg width="38" height="35" viewBox="0 0 38 35"><rect width="38" height="27" rx="3" fill="#9aa0a6"/><path fill="#80868b" d="M12 31h14v4H12z"/><path fill="#5f6368" d="M15 27h8v4h-8z"/><path d="M11 5.500l14 6-14 7.500" fill="none" stroke="#fff" stroke-width="4"/><path fill="#fff" d="M21 19h7v3.500h-7z"/></svg>
    <div><div style="font-size:13px;letter-spacing:.86px;line-height:24px;color:#3c4043">CLOUD SHELL</div><div style="letter-spacing:.4px;line-height:25px;color:#3c4043">Terminal</div></div>
    <span class="shtab">(stud-perf-pred)</span>
    <svg width="11" height="11" style="color:#1a73e8;margin-top:18px"><use href="#xs"/></svg>
    <svg width="14" height="14" viewBox="0 0 14 14" style="margin-top:15px"><path d="M7 0v14M0 7h14" stroke="#bdbfc2" stroke-width="1.300"/></svg>
    <svg width="9" height="5" viewBox="0 0 9 5" style="margin-top:15px"><path fill="#bdbfc2" d="M0 0h9L4.500 5z"/></svg>
    <span class="edbtn act d-flex align-items-center"><svg width="18" height="18" viewBox="0 0 18 18"><path class="fillc" d="M0 13.500V17h3.500L12.500 7.500 9 4zM14.500 5.500l-3.500-3.500L12.500.500c.5-.5 1.200-.5 1.700 0l2 2c.5.500.5 1.200 0 1.700zM7 15.500h9V18H5z"/></svg>Open editor</span>
    <span class="border-start" style="height:27px"></span>
    <svg width="21" height="15" viewBox="0 0 21 15"><path fill="none" stroke="#b0b3b7" stroke-width="1.800" d="M1 1h19v13H1z"/><path stroke="#b0b3b7" stroke-width="2" stroke-dasharray="2 1" d="M3.800 4.500h13.500M3.800 7.700h13.500"/><path stroke="#b0b3b7" stroke-width="1.500" d="M6 11.200h9"/></svg>
    <svg width="22" height="22" viewBox="1 1 22 22"><path fill="none" stroke="#b0b3b7" stroke-width="1.800" d="M19.430 12.980c.04-.32.07-.64.07-.98s-.03-.66-.07-.98l2.110-1.650-2.120-4.320-3.100 1c-.52-.4-1.080-.73-1.690-.98L14.460 2H9.540l-.41 3.070c-.61.250-1.170.590-1.690.980l-3.100-1-2.120 4.320 2.350 1.650c-.04.320-.07.650-.07.980s.03.660.07.980l-2.350 1.650 2.120 4.320 3.100-1c.52.400 1.080.730 1.690.980L9.540 22h4.920l.17-3.070c.61-.250 1.170-.590 1.690-.980l3.100 1 2.120-4.320z"/><circle cx="12" cy="12" r="3.400" fill="#b0b3b7"/></svg>
    <svg width="21" height="17" viewBox="0 0 21 17"><path fill="none" stroke="#b0b3b7" stroke-width="2" d="M1 1h19v15H1z"/><path fill="#b0b3b7" d="M1 0h19v4H1z"/><path fill="#b0b3b7" fill-rule="evenodd" d="M4 10c3-4.500 10-4.500 13 0-3 4.500-10 4.500-13 0zm6.500-1.800a1.800 1.800 0 1 0 0 3.600 1.800 1.800 0 0 0 0-3.600z"/></svg>
    <svg width="24" height="19" viewBox="0 0 24 19"><path fill="none" stroke="#3c4043" stroke-width="2" d="M2 1h20l1 1v15l-1 1H2l-1-1V2zM4.500 14h15"/></svg>
    <svg width="6" height="18" style="color:#b0b3b7;margin-left:2px"><use href="#dots"/></svg>
    <span class="border-start" style="height:27px;margin-left:-2px"></span>
    <svg width="13" height="2" style="margin-top:17px"><rect width="13" height="2" fill="#b0b3b7"/></svg>
    <svg width="19" height="2" style="margin-top:-17px"><rect width="19" height="2" fill="#202124"/></svg>
    <svg width="20" height="19" viewBox="0 0 20 19"><path fill="none" stroke="#3c4043" stroke-width="2" d="M9 1H2L1 2v15l1 1h16l1-1v-7M12 1h7v6.500M18.500 1.500L6 13.500"/></svg>
    <svg width="15" height="15" viewBox="0 0 15 15"><path stroke="#3c4043" stroke-width="2" d="M.7.7l13.600 13.600M14.300.7L.7 14.300"/></svg>
  </section>
</main>
<div class="pagebar"><div></div></div>
</div>

<!-- taskbar -->
<footer class="taskbar rowgrid">
  <svg width="29" height="29" viewBox="0 0 29 29"><path fill="url(#gwin)" d="M0 0h14v14H0zM15 0h14v14H15zM0 15h14v14H0zM15 15h14v14H15z"/></svg>
  <div class="tsearch d-flex align-items-center"><svg width="18" height="18" viewBox="0 0 18 18"><g class="linec" stroke-width="2"><circle cx="8" cy="7.500" r="6.500"/><path d="M12.500 12.500L17 17.500"/></g></svg>Search</div>
  <div class="tapp"><svg width="30" height="29" viewBox="0 0 30 29"><rect x="7" width="23" height="20" rx="1.500" fill="#f4f4f4"/><rect y="8" width="22" height="20" rx="1.500" fill="#5d5f5d"/><rect x="7" y="8" width="15" height="12" fill="#b9bab9"/></svg></div>
  <div class="tapp"><svg width="28" height="26" viewBox="0 0 28 26"><path d="M7 1h9c3 0 3 2 4 5h-5c-3 0-3.500 2-4.500 6L8 19H3c-3 0-3.500-2-2.500-5L3.500 4C4.300 1.800 5 1 7 1z" fill="url(#gcp1)"/><path d="M8 1h8c3 0 3 2 4 5h-5L11 9z" fill="#1762d4"/><path d="M21 25h-9c-3 0-3-2-4-5h5c3 0 3.500-2 4.500-6L20 7h5c3 0 3.500 2 2.500 5l-3 10c-.8 2.200-1.500 3-3.500 3z" fill="url(#gcp2)"/></svg></div>
  <div class="tapp"><svg width="31" height="30" viewBox="0 0 31 30"><circle cx="15.500" cy="15" r="15" fill="#1272c9"/><path d="M.5 15C1 5 8 0 15.500 0 24 0 31 6 31 13c0 5-4 7.500-8.500 7.500-3 0-4.500-1.300-3.500-2.500 3-4-1-8-6-8C6 10 1.500 13 .5 15z" fill="url(#gedge)"/><path d="M13 10c-5 2-7 11 0 16 5 3 11 2 15-2-7 3-16 1-15.500-7 .1-2 1.500-3.500 3-4z" fill="#0d4a94"/><path d="M19 18c-1 1.500 1 2.500 3.500 2.500 3 0 5.500-1 7-2.500l-1.500 5c-6 1-12-2-9-5z" fill="#1c2a18"/></svg></div>
  <div class="tapp run"><svg width="30" height="27" viewBox="0 0 30 27"><path d="M0 2c0-1 .5-1.500 1.500-1.500H10L13 4H0z" fill="#e59e0c"/><rect y="3" width="30" height="24" rx="1.500" fill="url(#gfold)"/><path d="M5 27v-5c0-2 1-3 3-3h14c2 0 3 1 3 3v5z" fill="#1475c8"/><path d="M9 23h12" stroke="#0a4a8c" stroke-width="1.500"/></svg></div>
  <div class="tapp"><svg width="29" height="29" viewBox="0 0 29 29"><path d="M8 6V2.500C8 1.500 8.500 1 9.500 1h10c1 0 1.500.5 1.500 1.500V6" fill="none" stroke="#35b0ea" stroke-width="2"/><path d="M0 5h29v20c0 2.500-1.500 4-4 4H4c-2.500 0-4-1.500-4-4z" fill="#efefef"/><path fill="#f25022" d="M9 11h5v5H9z"/><path fill="#7fba00" d="M15 11h5v5h-5z"/><path fill="#00a4ef" d="M9 17h5v5H9z"/><path fill="#ffb900" d="M15 17h5v5h-5z"/></svg></div>
  <div class="tapp"><svg width="30" height="30" viewBox="0 0 30 30"><rect width="30" height="30" rx="1" fill="#0096d6"/><text x="2.500" y="18.500" font-family="Open Sans" font-size="9.500" fill="#fff">my</text><text x="14.500" y="19.500" font-family="Open Sans" font-size="14" font-weight="700" font-style="italic" fill="#fff" letter-spacing="-1.500">hp</text></svg></div>
  <div class="tapp run cur"><svg width="30" height="30" viewBox="0 0 30 30"><circle cx="15" cy="15" r="15" fill="#fbc116"/><path d="M2 7.500A15 15 0 0 0 14 30l6.500-12L15 15z" fill="#2da94f"/><path d="M15 8h13.300A15 15 0 0 0 2 7.500L8.500 18z" fill="#e33b2e"/><circle cx="15" cy="15" r="7.300" fill="#fff"/><circle cx="15" cy="15" r="5.800" fill="#3b7ded"/></svg><svg width="20" height="20" class="position-absolute" style="left:25px;top:3px"><use href="#panda"/></svg></div>
  <div class="tapp run"><svg width="30" height="30" viewBox="0 0 30 30"><circle cx="15" cy="15" r="15" fill="#1ed760"/><g fill="none" stroke="#12240f" stroke-linecap="round"><path stroke-width="3" d="M6 10.500c6-1.800 13-1.200 18.500 1.800"/><path stroke-width="2.500" d="M7 15.500c5-1.500 11-.9 15.500 1.800"/><path stroke-width="2.100" d="M7.700 20.200c4.500-1.200 9-.8 13 1.600"/></g></svg></div>
  <div class="tapp run"><svg width="30" height="30" viewBox="0 0 30 30"><path d="M22 0l-20 18.500c-.6.600-.6 1.300 0 1.900l1.500 1.300c.5.400 1.100.4 1.600 0L22 9z" fill="#0a6fb8"/><path d="M22 30L2 11.500c-.6-.6-.6-1.300 0-1.900l1.500-1.300c.5-.4 1.100-.4 1.600 0L22 21z" fill="#1487d4"/><path d="M22 0l7 3c.6.300 1 .8 1 1.500v21c0 .7-.4 1.200-1 1.500l-7 3z" fill="#2aa5f0"/></svg></div>
  <div class="tapp run"><svg width="30" height="30" viewBox="0 0 30 30"><circle cx="15" cy="15" r="15" fill="#1d8ceb"/><svg x="4" y="7" width="23" height="17" style="color:#fff"><use href="#whale"/></svg></svg></div>
  <div class="tapp run"><svg width="26" height="30" viewBox="0 0 26 30"><path d="M7 0h12l3 3 2.500-.3L26 6l-1 3 .5 2L22 24.500 13 30l-9-5.500L.5 11 1 9 0 6l1.500-3.300L4 3z" fill="#fb4a1c"/><path d="M13 5.500l4-1 4.500 5-3 5 1 3-4 2.500-1.200-3 2.200-2.500-3.500-1-3.500 1 2.200 2.500-1.200 3-4-2.500 1-3-3-5L9 4.500zM13 19.500l4 2.200-4 3-4-3z" fill="#fff"/><path d="M6.500 9.500l4 1 .5 2M19.500 9.500l-4 1-.5 2" fill="none" stroke="#fb4a1c" stroke-width="1.300"/></svg></div>
  <div class="tapp run"><svg width="30" height="22" viewBox="0 0 30 22"><rect width="30" height="22" rx="1.500" fill="#404040"/><path d="M1.500 0h27c.8 0 1.500.7 1.500 1.500V4H0V1.500C0 .7.700 0 1.500 0z" fill="url(#gterm)"/><path d="M4.500 8l5 5-5 5" fill="none" stroke="#ddd" stroke-width="3"/><path fill="#fff" d="M13 16.500h10V19H13z"/></svg></div>
  <div class="tapp run"><svg width="30" height="30" viewBox="0 0 30 30"><path d="M2 28l2-7A13 13 0 1 1 9 26z" fill="none" stroke="#25d366" stroke-width="2.700"/><path d="M10 8c-3 3 0 8 3.500 11s7 3.500 8.500 1v-2.500l-3.500-1.500-1.800 1.800c-2-.8-3.500-2.500-4.200-4.200l1.500-1.800L12.500 8z" fill="#25d366"/></svg><span class="cnt">99+</span></div>
  <i></i>
  <div class="wx"><svg width="26" height="26" viewBox="0 0 26 26" class="position-absolute" style="left:2px;top:7px"><circle cx="12.500" cy="13" r="12.500" fill="url(#gsun)"/></svg><span class="wxn">9</span>41°C<br><span style="color:#bfc4bb">Sunny</span></div>
  <svg width="14" height="9" viewBox="0 0 14 9"><path class="linec" stroke-width="2" d="M1 8l6-6.500L13 8"/></svg>
  <svg width="20" height="15" viewBox="0 0 20 15"><rect x=".8" y=".8" width="18.400" height="13.400" rx="2" class="linec" stroke-width="1.600"/><path class="linec" stroke-width="1.600" stroke-dasharray="1.600 1.400" d="M4 4.500h13M4 7.500h13"/><path class="linec" stroke-width="1.500" d="M5 11h10"/></svg>
  <div class="text-center" style="width:42px;line-height:20px">ENG<br>IN</div>
  <svg width="20" height="16" viewBox="0 0 20 16"><g class="linec" stroke-width="1.800"><path d="M.7 6C6-.5 14-.5 19.300 6M3.800 9c3.500-4.200 9-4.200 12.400 0M6.800 12c1.800-2.200 4.600-2.200 6.400 0"/></g><circle cx="10" cy="14" r="1.700" class="fillc"/></svg>
  <svg width="20" height="18" viewBox="0 0 20 18"><path class="linec" stroke-width="1.600" d="M1 6.500h3L8.500 2v14L4 11.500H1zM11 6.500c1.300 1.500 1.300 3.500 0 5M13.500 4.500c2.500 2.800 2.500 6.200 0 9M16 2.500c4 4 4 9 0 13"/></svg>
  <svg width="20" height="17" viewBox="0 0 20 17"><path class="linec" stroke-width="1.700" d="M8 3.500h8.500v12H2V11M17 7h2v5h-2"/><path class="fillc" d="M3 12V5L5 0v4h4L5 11v3h3V8l-2 3z"/></svg>
  <div class="text-end" style="line-height:20px">13:15<br>22/04/2025</div>
</footer>
</body>
</html>
